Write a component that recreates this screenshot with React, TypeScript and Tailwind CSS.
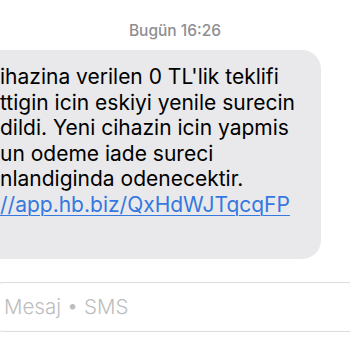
import React from "react";

export default function App() {
  const lines = [
    "ihazina verilen 0 TL'lik teklifi",
    "ttigin icin eskiyi yenile surecin",
    "dildi. Yeni cihazin icin yapmis",
    "un odeme iade sureci",
    "nlandiginda odenecektir.",
  ];
  return (
    <div className="w-[350px] h-[350px] bg-white overflow-hidden font-['Inter',sans-serif]">
      <div className="pt-[21px] h-[41px] text-center text-[15.5px] leading-[20px] font-medium text-[#8e8e93]">
        Bugün 16:26
      </div>
      <div className="mt-[9px] w-[321px] h-[209px] rounded-r-[19px] bg-[#e9e9eb] pt-[14px] text-[21px] leading-[25.5px] text-black">
        {lines.map((l, i) => (
          <div key={i} className="whitespace-nowrap">{l}</div>
        ))}
        <div className="whitespace-nowrap text-[#3478e0] underline underline-offset-[3px] decoration-[1px]">
          //app.hb.biz/QxHdWJTqcqFP
        </div>
      </div>
      <div className="mt-[23px] -ml-[20px] w-[420px] h-[50px] rounded-full border border-[#dcdcdc] pl-[23px] flex items-center text-[20.5px] font-light text-[#bdbdbd]">
        Mesaj • SMS
      </div>
    </div>
  );
}
